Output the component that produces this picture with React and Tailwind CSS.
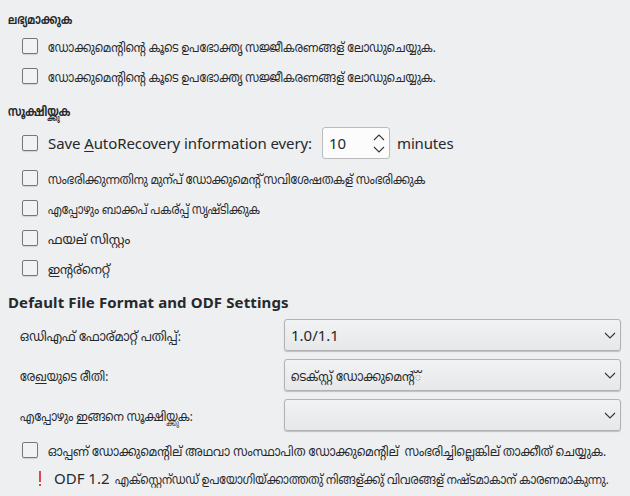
import { useLayoutEffect, useRef } from "react";

function Box() {
  return (
    <span className="mr-[10px] h-4 w-4 shrink-0 rounded-[2px] border border-[#75777a] bg-[#f1f2f3] shadow-[0_1px_1px_rgba(0,0,0,0.12)]" />
  );
}

// Malayalam caption, condensed or widened so that it fills the given width.
function Label({ children, width, className = "" }) {
  const ref = useRef(null);
  useLayoutEffect(() => {
    const el = ref.current;
    el.style.transform = `scaleX(${width / el.offsetWidth})`;
  }, [width]);
  return (
    <span className={`inline-block text-[13px] ${className}`} style={{ width }}>
      <span ref={ref} className="inline-block origin-left">
        {children}
      </span>
    </span>
  );
}

// The conjunct "ya + kka", with the second part stacked below the first.
function Stack({ children }) {
  return (
    <span role="img" aria-label={`യ്${children}`} className="relative inline-block">
      യ
      <span className="absolute top-[9px] left-0 text-[8px]">{children}</span>
    </span>
  );
}

// Underlined access key of a Malayalam caption.
function Key({ children }) {
  return <u className="underline decoration-1 underline-offset-2 [text-decoration-skip-ink:none]">{children}</u>;
}

function Check({ children, width }) {
  return (
    <label className="flex h-[30px] items-center pl-[22px]">
      <Box />
      <Label width={width} className="pt-0.5">{children}</Label>
    </label>
  );
}

function Chevron() {
  return (
    <svg width="12" height="7" viewBox="0 0 12 7" fill="none" stroke="#31363b" strokeWidth="1.1">
      <path d="M1 1l5 5 5-5" />
    </svg>
  );
}

function Field({ label, children }) {
  return (
    <div className="flex h-8 items-center pl-5">
      <div className="w-[264px]">{label}</div>
      <div className="flex h-8 w-[337px] items-center justify-between rounded-[3px] border border-[#b0b2b4] bg-linear-to-b from-[#f1f2f3] to-[#e7e8ea] pr-[4px] pl-[6px] shadow-[0_1px_1px_rgba(0,0,0,0.2)]">
        <span>{children}</span>
        <Chevron />
      </div>
    </div>
  );
}

export default function App() {
  return (
    <main className="h-[496px] w-[630px] overflow-hidden bg-[#eeeff1] pt-[7px] font-['Noto_Sans','Noto_Sans_Malayalam',sans-serif] text-[15px] leading-none whitespace-pre text-[#26292c]">
      <h2 className="flex h-6 items-center pl-2 font-bold"><Label width={64}>ലഭ്യമാക്കുക</Label></h2>
      <Check width={388}>ഡോക്കുമെന്റിന്റെ കൂടെ ഉപഭോക്തൃ സജ്ജീകരണങ്ങള് ലോഡുചെയ്യുക.</Check>
      <Check width={388}>ഡോക്കുമെന്റിന്റെ കൂടെ ഉപഭോക്തൃ സജ്ജീകരണങ്ങള് ലോഡുചെയ്യുക.</Check>
      <h2 className="mt-[7px] flex h-[27px] items-center pl-2 font-bold"><Label width={62}>സൂക്ഷി<Stack>ക്കു</Stack>ക</Label></h2>
      <div className="mt-px flex h-[34px] items-center pl-[22px]">
        <Box />
        <span className="w-[274px] tracking-[-0.09px]">Save <u className="underline-offset-2">A</u>utoRecovery information every:</span>
        <div className="flex h-8 w-[68px] items-center justify-between rounded-[3px] border border-[#b9bbbd] bg-[#fcfcfc] pr-1 pl-[6px]">
          <span>10</span>
          <span className="flex flex-col gap-[5px]">
            <span className="rotate-180"><Chevron /></span>
            <Chevron />
          </span>
        </div>
        <span className="ml-[7px] tracking-[-0.15px]">minutes</span>
      </div>
      <div className="pt-[3px]">
        <Check width={377}>സംഭരിക്കുന്നതിനു മുന്പ് ഡോക്കുമെന്റ് സവിശേഷതകള് സംഭരിക്കുക</Check>
        <Check width={212}>എപ്പോഴും ബാക്കപ് പകര്പ്പ് സൃഷ്ടിക്കുക</Check>
        <Check width={82}>ഫയല് സിസ്റ്റം</Check>
        <Check width={62}>ഇന്റര്നെറ്റ്</Check>
      </div>
      <h2 className="mt-0.5 flex h-[34px] items-center pl-2 font-bold tracking-[0.12px]">Default File Format and ODF Settings</h2>
      <div className="flex flex-col gap-2">
        <Field label={<Label width={161}>ഒഡിഎഫ് ഫോര്മാറ്റ് പതിപ്പ്:</Label>}>1.0/1.1</Field>
        <Field label={<Label width={88}>രേ<Key>ഖ</Key>യുടെ രീതി:</Label>}><Label width={130} className="pt-0.5">ടെക്സ്റ്റ് ഡോക്കുമെന്റ്്</Label></Field>
        <Field label={<Label width={173}>എപ്പോഴും <Key>ഇ</Key>ങ്ങനെ സൂക്ഷി<Stack>ക്കു</Stack>ക:</Label>} />
      </div>
      <div className="pt-1">
        <Check width={558}>ഓപ്പണ് ഡോക്കുമെന്റില് അഥവാ സംസ്ഥാപിത ഡോക്കുമെന്റില്  സംഭരിച്ചില്ലെങ്കില് താക്കീത് ചെയ്യുക.</Check>
      </div>
      <div className="flex h-[27px] items-center pl-[39px]">
        <svg width="2" height="15" viewBox="0 0 2 15" className="mr-[13px] shrink-0" fill="#da4453">
          <path d="M0 0h2v11H0zM0 13h2v2H0z" />
        </svg>
        <span className="w-[61px]">ODF 1.2</span>
        <Label width={494} className="pt-0.5">എക്സ്റ്റെന്ഡഡ് ഉപയോഗിയ്ക്കാത്തതു് നിങ്ങള്ക്കു് വിവരങ്ങള് നഷ്ടമാകാന് കാരണമാകുന്നു.</Label>
      </div>
    </main>
  );
}
